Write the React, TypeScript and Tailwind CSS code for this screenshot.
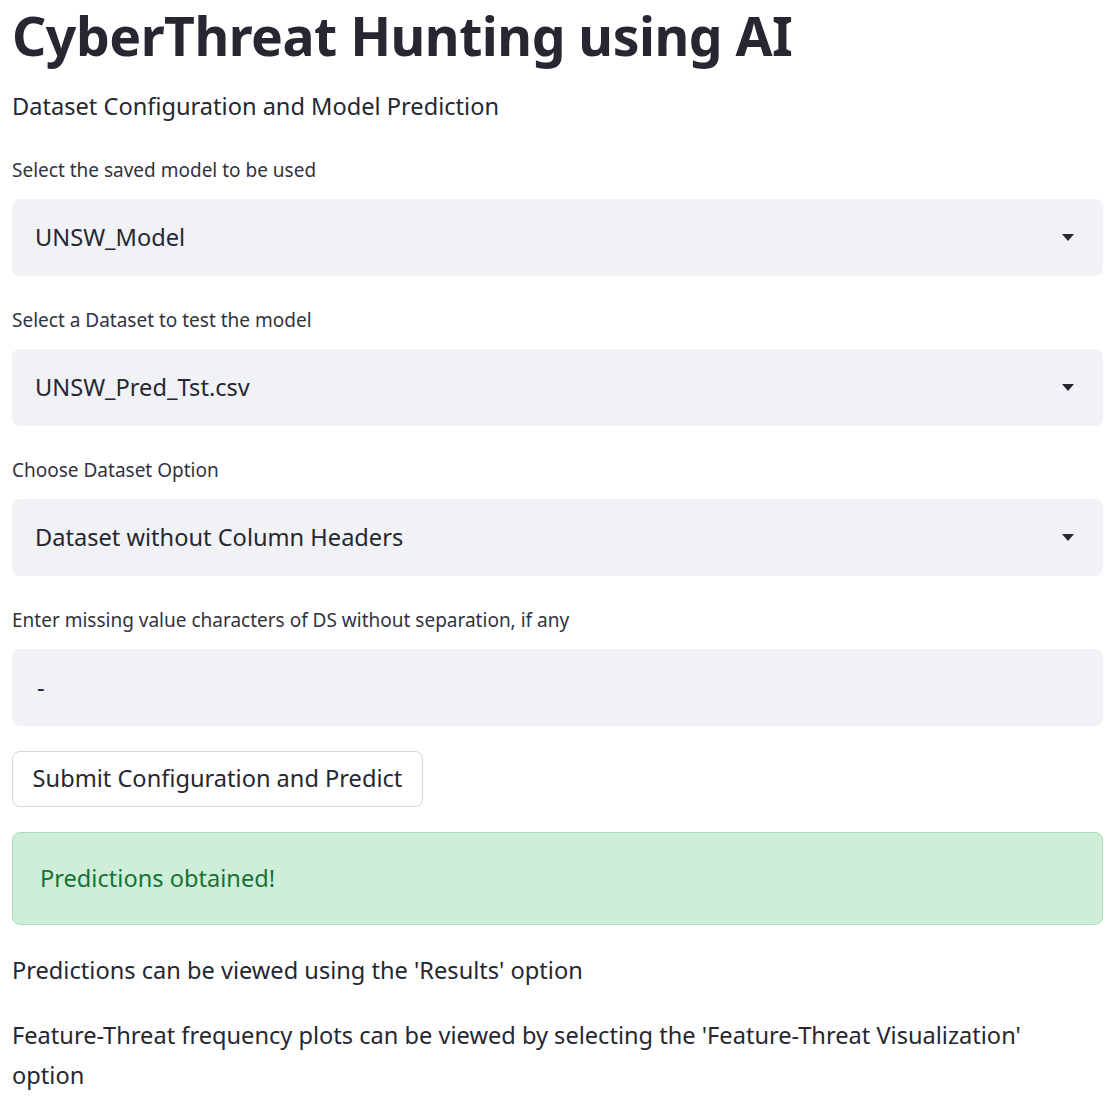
const font = { fontFamily: '"Noto Sans", "Open Sans", sans-serif' };

function SelectBox({ value }: { value: string }) {
  return (
    <div className="flex items-center justify-between h-[77px] rounded-lg bg-[#f0f2f6] pl-[23px] pr-[29px]">
      <span className="text-[23.6px] text-[#262730]">{value}</span>
      <svg width="12" height="7" viewBox="0 0 12 7">
        <path d="M0 0h12L6 7z" fill="#262730" />
      </svg>
    </div>
  );
}

function Field({ label, children }: { label: string; children: React.ReactNode }) {
  return (
    <div className="flex flex-col">
      <label className="text-[19px] leading-[28px] text-[#31333f] mb-[15px]">{label}</label>
      {children}
    </div>
  );
}

export default function App() {
  return (
    <div className="min-h-screen bg-white text-[#262730]" style={font}>
      <div className="w-[1091px] ml-[12px] flex flex-col">
        <h1 className="text-[53.5px] leading-[72px] font-bold tracking-[-0.5px]">
          CyberThreat Hunting using AI
        </h1>
        <p className="text-[23.6px] leading-[36px] mt-[16px]">Dataset Configuration and Model Prediction</p>

        <div className="flex flex-col gap-[30px] mt-[32px]">
          <Field label="Select the saved model to be used">
            <SelectBox value="UNSW_Model" />
          </Field>
          <Field label="Select a Dataset to test the model">
            <SelectBox value="UNSW_Pred_Tst.csv" />
          </Field>
          <Field label="Choose Dataset Option">
            <SelectBox value="Dataset without Column Headers" />
          </Field>
          <Field label="Enter missing value characters of DS without separation, if any">
            <div className="flex items-center h-[77px] rounded-lg bg-[#f0f2f6] pl-[25px]">
              <span className="text-[23.6px]">-</span>
            </div>
          </Field>
        </div>

        <div className="mt-[25px]">
          <button className="h-[56px] w-[411px] rounded-lg border border-[#d5d6db] bg-white text-[23.6px] text-[#262730]">
            Submit Configuration and Predict
          </button>
        </div>

        <div className="mt-[25px] h-[93px] rounded-lg border border-[#a9dfba] bg-[#cfeed9] flex items-center pl-[27px]">
          <span className="text-[23.6px] text-[#177233]">Predictions obtained!</span>
        </div>

        <p className="text-[23.6px] leading-[40px] mt-[25px]">Predictions can be viewed using the 'Results' option</p>
        <p className="text-[23.6px] leading-[40px] mt-[25px] pr-[40px]">
          Feature-Threat frequency plots can be viewed by selecting the 'Feature-Threat Visualization' option
        </p>
      </div>
    </div>
  );
}
